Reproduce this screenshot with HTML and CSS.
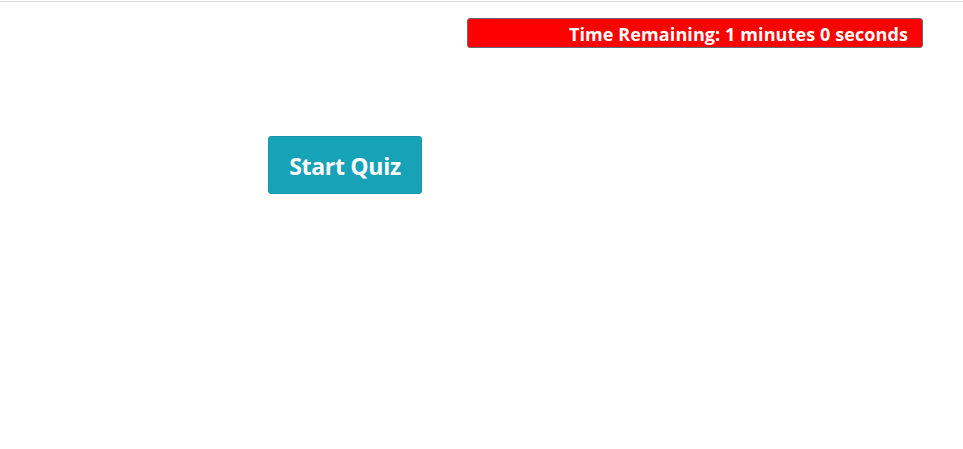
FILE: index.html
```html
<!DOCTYPE html>
<html>
<head>
<meta charset="utf-8">
<link rel="stylesheet" href="styles.css">
</head>
<body>
<div class="topline"></div>
<div class="timer-row">
  <div class="timer">Time Remaining: 1 minutes 0 seconds</div>
</div>
<div class="start-row">
  <button class="start-btn">Start Quiz</button>
</div>
</body>
</html>
```
FILE: styles.css
```css
html, body {
  margin: 0;
  padding: 0;
  background: #fff;
  font-family: "Open Sans", "Noto Sans", sans-serif;
}
.topline {
  margin-top: 1px;
  height: 0;
  border-top: 1px solid #dcdcdc;
}
.timer-row {
  display: flex;
  padding-left: 467px;
  padding-top: 16px;
}
.timer {
  box-sizing: border-box;
  width: 456px;
  height: 30px;
  background: #ff0000;
  border: 1px solid #666a75;
  border-radius: 3px;
  color: #fff;
  font-weight: 700;
  font-size: 18px;
  line-height: 30px;
  text-align: right;
  padding-right: 14px;
  letter-spacing: 0.1px;
}
.start-row {
  display: flex;
  padding-left: 268px;
  padding-top: 88px;
}
.start-btn {
  box-sizing: border-box;
  width: 154px;
  height: 58px;
  background: #17a2b8;
  border: 1px solid #1797ab;
  border-radius: 3px;
  color: #fff;
  font-family: "Open Sans", "Noto Sans", sans-serif;
  font-weight: 700;
  font-size: 23px;
  padding: 2px 0 0 0;
  letter-spacing: -0.3px;
}
```
